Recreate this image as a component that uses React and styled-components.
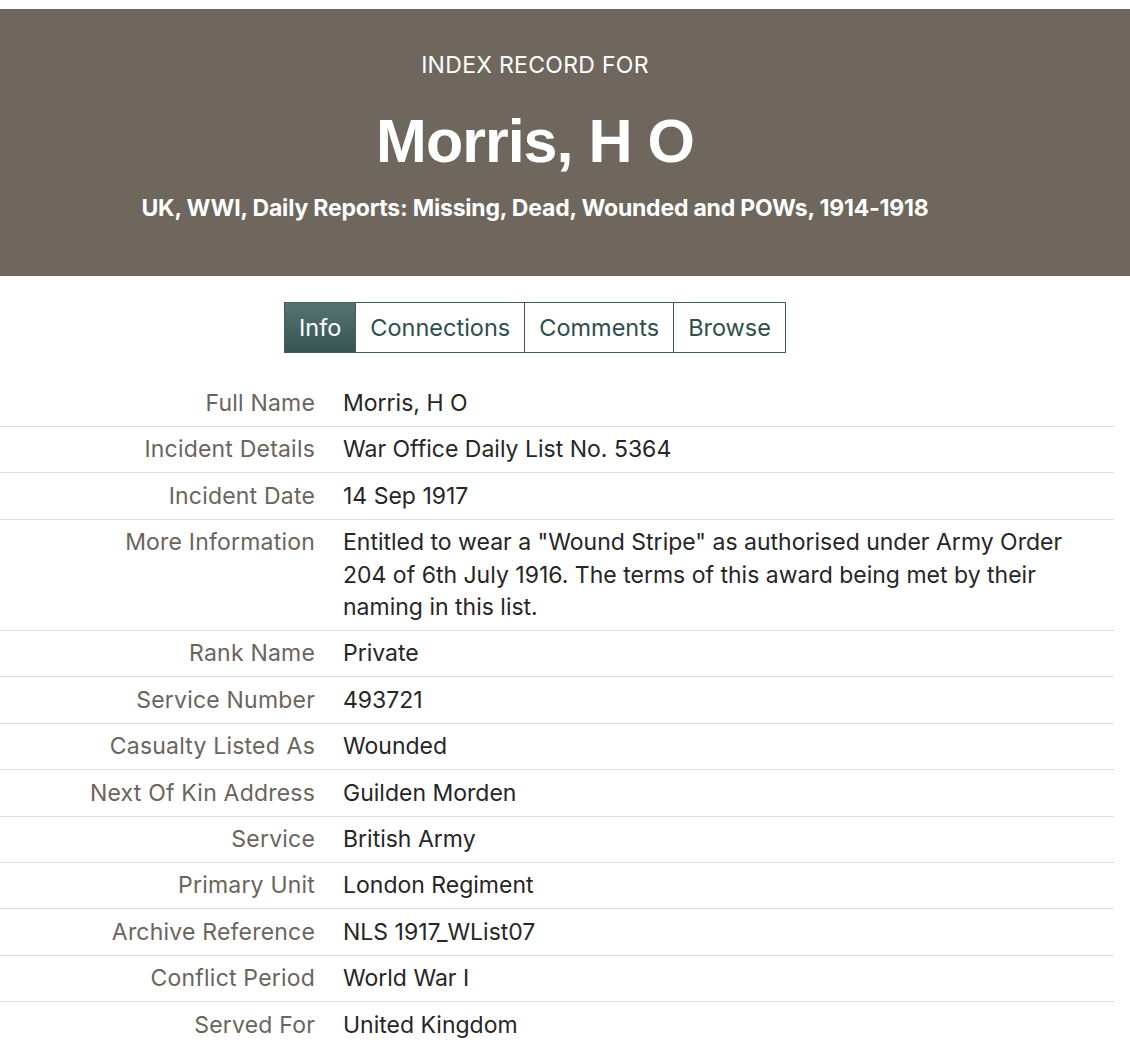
import React from "react";
import styled, { createGlobalStyle } from "styled-components";

const Global = createGlobalStyle`
  html, body { margin: 0; padding: 0; background: #fff; }
  body { font-family: Inter, "Liberation Sans", Arial, sans-serif; }
`;

const Page = styled.div`
  padding-top: 9px;
`;

const Header = styled.header`
  background: #6f675e;
  color: #fff;
  height: 267px;
  box-sizing: border-box;
  padding-top: 40px;
`;

const HeaderInner = styled.div`
  width: 1070px;
  text-align: center;
`;

const Kicker = styled.div`
  font-size: 23px;
  line-height: 32px;
  letter-spacing: 0.3px;
  text-transform: uppercase;
  font-weight: 400;
`;

const Title = styled.h1`
  margin: 24px 0 0;
  font-family: "Liberation Sans", Arial, sans-serif;
  font-size: 61px;
  line-height: 72px;
  font-weight: 700;
  letter-spacing: -1px;
`;

const Subtitle = styled.div`
  margin-top: 15px;
  font-size: 23px;
  line-height: 32px;
  font-weight: 700;
  letter-spacing: -0.2px;
`;

const TabsWrap = styled.div`
  width: 1070px;
  display: flex;
  justify-content: center;
  margin-top: 26px;
`;

const Tabs = styled.nav`
  display: flex;
  border: 1px solid #3f5e5b;
`;

const Tab = styled.div`
  height: 49px;
  box-sizing: border-box;
  display: flex;
  align-items: center;
  padding: 0 14px;
  font-size: 23.5px;
  color: ${(p) => (p.$active ? "#fff" : "#2f4e4c")};
  background: ${(p) =>
    p.$active ? "linear-gradient(180deg, #567472 0%, #365452 100%)" : "#fff"};
  & + & {
    border-left: 1px solid #3f5e5b;
  }
`;

const Table = styled.div`
  width: 1114px;
  margin-top: 27.5px;
`;

const Row = styled.div`
  display: grid;
  grid-template-columns: 315px 1fr;
  column-gap: 28px;
  padding: 6.5px 0;
  font-size: 23px;
  line-height: 32.4px;
  & + & {
    border-top: 1px solid #dcdcdc;
  }
`;

const Label = styled.div`
  text-align: right;
  color: #6b645d;
  letter-spacing: 0.2px;
`;

const Value = styled.div`
  color: #262626;
  padding-right: 20px;
`;

const rows = [
  ["Full Name", "Morris, H O"],
  ["Incident Details", "War Office Daily List No. 5364"],
  ["Incident Date", "14 Sep 1917"],
  [
    "More Information",
    'Entitled to wear a "Wound Stripe" as authorised under Army Order 204 of 6th July 1916. The terms of this award being met by their naming in this list.',
  ],
  ["Rank Name", "Private"],
  ["Service Number", "493721"],
  ["Casualty Listed As", "Wounded"],
  ["Next Of Kin Address", "Guilden Morden"],
  ["Service", "British Army"],
  ["Primary Unit", "London Regiment"],
  ["Archive Reference", "NLS 1917_WList07"],
  ["Conflict Period", "World War I"],
  ["Served For", "United Kingdom"],
];

export default function App() {
  return (
    <Page>
      <Global />
      <Header>
        <HeaderInner>
          <Kicker>Index Record For</Kicker>
          <Title>Morris, H O</Title>
          <Subtitle>
            UK, WWI, Daily Reports: Missing, Dead, Wounded and POWs, 1914-1918
          </Subtitle>
        </HeaderInner>
      </Header>
      <TabsWrap>
        <Tabs>
          <Tab $active>Info</Tab>
          <Tab>Connections</Tab>
          <Tab>Comments</Tab>
          <Tab>Browse</Tab>
        </Tabs>
      </TabsWrap>
      <Table>
        {rows.map(([l, v]) => (
          <Row key={l}>
            <Label>{l}</Label>
            <Value>{v}</Value>
          </Row>
        ))}
      </Table>
    </Page>
  );
}
